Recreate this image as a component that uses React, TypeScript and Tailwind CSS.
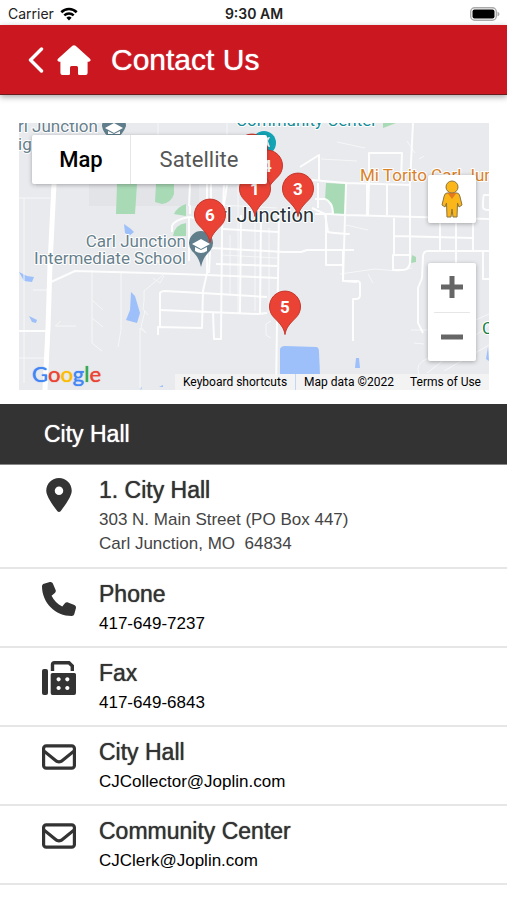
import type { ReactNode } from 'react';
import { FaLocationDot, FaPhone, FaRegEnvelope } from 'react-icons/fa6';

interface Contact {
  icon: ReactNode;
  title: string;
  lines: string[];
  href?: string;
}

interface Pin {
  id: number;
  position: string;
}

const PINS: Pin[] = [
  { id: 2, position: 'left-[217px] top-[10px]' },
  { id: 4, position: 'left-[232px] top-[26px]' },
  { id: 1, position: 'left-[220px] top-[49px]' },
  { id: 3, position: 'left-[263px] top-[49px]' },
  { id: 6, position: 'left-[175px] top-[75px]' },
  { id: 5, position: 'left-[250px] top-[167px]' },
];

function FaxIcon() {
  return (
    <svg viewBox="0 0 34 34" className="size-[34px]" aria-hidden="true">
      <rect x="0" y="8" width="6" height="26" rx="2" fill="currentColor" />
      <path d="M10.500 10V3.500Q10.500 1.700 12.300 1.700H27L30.300 5V10" fill="none" stroke="currentColor" strokeWidth="3.400" />
      <path
        fillRule="evenodd"
        fill="currentColor"
        d="M10.500 12H32.500Q34 12 34 13.500V32Q34 34 32 34H10.500Q8.700 34 8.700 32V13.500Q8.700 12 10.500 12ZM16.600 16.200a2.100 2.100 0 1 0 .01 0ZM25.300 16.200a2.100 2.100 0 1 0 .01 0ZM16.600 24.900a2.100 2.100 0 1 0 .01 0ZM25.300 24.900a2.100 2.100 0 1 0 .01 0Z"
      />
    </svg>
  );
}

const CONTACTS: Contact[] = [
  {
    icon: <FaLocationDot className="h-[34px] w-[34px]" />,
    title: '1. City Hall',
    lines: ['303 N. Main Street (PO Box 447)', 'Carl Junction, MO\u00a0 64834'],
  },
  {
    icon: <FaPhone className="size-[34px]" />,
    title: 'Phone',
    lines: ['417-649-7237'],
    href: 'tel:417-649-7237',
  },
  {
    icon: <FaxIcon />,
    title: 'Fax',
    lines: ['417-649-6843'],
    href: 'tel:417-649-6843',
  },
  {
    icon: <FaRegEnvelope className="size-[34px]" />,
    title: 'City Hall',
    lines: ['CJCollector@Joplin.com'],
    href: 'mailto:CJCollector@Joplin.com',
  },
  {
    icon: <FaRegEnvelope className="size-[34px]" />,
    title: 'Community Center',
    lines: ['CJClerk@Joplin.com'],
    href: 'mailto:CJClerk@Joplin.com',
  },
];

function StatusBar() {
  return (
    <div className="grid h-[25px] grid-cols-3 items-center pt-[3px] pr-[7px] pl-[8px] font-['Inter',sans-serif] text-[14px] leading-[20px] text-[#222]">
      <div className="flex items-center gap-[6px]">
        <span>Carrier</span>
        <svg viewBox="0 0 18 14" className="h-[14px] w-[18px] text-black" fill="none" stroke="currentColor" aria-hidden="true">
          <path d="M1.300 5.200A11 11 0 0 1 16.700 5.200" strokeWidth="2.600" />
          <path d="M4.300 8.400A6.800 6.800 0 0 1 13.700 8.400" strokeWidth="2.400" />
          <path d="M9 13.500L6.400 10.800A3.800 3.800 0 0 1 11.600 10.800Z" fill="currentColor" stroke="none" />
        </svg>
      </div>
      <span className="text-center font-semibold">9:30 AM</span>
      <svg viewBox="0 0 30 14" className="h-[14px] w-[30px] justify-self-end" aria-hidden="true">
        <rect x="0.700" y="0.700" width="25.600" height="12.600" rx="4" fill="#fff" stroke="#aaa" strokeWidth="1.400" />
        <rect x="2.500" y="2.500" width="22" height="9" rx="2" fill="#000" />
        <path d="M27.500 4.500Q29.500 5.500 29.500 7T27.500 9.500Z" fill="#aaa" />
      </svg>
    </div>
  );
}

function Header() {
  return (
    <header className="flex h-[70px] items-center border-b border-[#6b1a1e] bg-[#cb1820] pl-[28px] text-white shadow-[0_2px_6px_rgba(0,0,0,0.35)]">
      <button type="button" aria-label="Back" className="mr-[13px]">
        <svg viewBox="0 0 16 26" className="h-[26px] w-[16px]" fill="none" stroke="currentColor" strokeWidth="3.400" strokeLinecap="round" strokeLinejoin="round">
          <path d="M13.500 2L2.500 13L13.500 24" />
        </svg>
      </button>
      <a href="#home" aria-label="Home" className="mr-[20px]">
        <svg viewBox="0 0 34 30" className="h-[30px] w-[34px]" fill="currentColor">
          <path d="M15.400.8Q17-.5 18.600.8L33 13.800Q34.600 16.200 32 16.700H30.600V28Q30.600 30 28.600 30H22.300Q21 30 21 28.700V22.500Q21 21 19.500 21H14.500Q13 21 13 22.500V28.700Q13 30 11.700 30H5.400Q3.400 30 3.400 28V16.700H2Q-.6 16.200 1 13.800Z" />
        </svg>
      </a>
      <h1 className="text-[30px] leading-[36px] [text-shadow:0_0_1px_currentColor]">Contact Us</h1>
    </header>
  );
}

function MapArtwork() {
  return (
    <svg
      viewBox="0 0 470 267"
      preserveAspectRatio="xMidYMid slice"
      className="h-full w-full font-['Roboto',sans-serif]"
      fill="none"
      strokeLinejoin="round"
      aria-hidden="true"
    >
      <rect width="470" height="267" fill="#e8eaed" />
      <path d="M70 61H180V83H70Z" fill="#e3e4e8" />
      {/* parks */}
      <g fill="#a8dab5">
        <path d="M98 61H118L116 91H97Z" />
        <path d="M137 61H155V71Q152 80 143 81L136 79Z" />
        <path d="M167 81V93L155 91Q158 84 167 81Z" />
        <path d="M167 100V113H154Q155 102 167 100Z" />
        <path d="M307 60L327 61L325 92L315 91Q314 80 306 77Z" />
        <path d="M364 0H377L364 5Z" />
        <path d="M393 132L397 134V139L392 140Z" />
      </g>
      {/* water */}
      <g fill="#9dc0fa">
        <path d="M0 149L8 153L15 154L13 159L5 158Z" />
        <path d="M105 101L112 106L115 109L110 113L106 110Z" />
        <path d="M112 169L116 173L121 190L118 200L107 197L111 187Z" />
        <path d="M10 193L18 197L17 200L13 199Z" />
        <path d="M261 226Q262 223 266 223L297 224Q300 224 300 229L301 251H261Z" />
        <path d="M337 235H340L341 245H336Z" />
        <path d="M120 266L123 264L122 267Z" />
        <path d="M140 264L144 262V264Z" />
        <path d="M469 224L467 236L470 238Z" />
      </g>
      {/* minor roads */}
      <g stroke="#f6f7f8" strokeWidth="1">
        <path d="M0 75H31M139 0V12M208 0V12M5 75V260M16 30V64" />
        <path d="M73 147V220L83 228M73 177L84 187M73 195L84 204M102 150V207L99 224M145 151L137 158L125 168V178L124 186L129 192M126 188L122 204L127 210L121 205V267M32 167H14M37 203H57" />
        <path d="M36 203L42 198M0 235H25M145 153L141 160L134 155" />
        <path d="M219 62V190M201 82L258 85M236 84V188M250 105V190M203 132L258 135M211 112V172" />
        <path d="M302 36L338 38M318 19L346 25M388 18L396 30M400 36L405 33M327 102L349 107M321 151L356 146L379 148L393 145M349 151L354 160M392 207H408L420 198M395 220L405 221M400 252Q395 240 410 235L450 200L470 191M408 250L470 202M425 248L470 222" />
        <path d="M252 198L247 201V212L252 215" />
      </g>
      <g stroke="#fff" strokeWidth="2" strokeOpacity="0.9">
        <path d="M32 159L56 148L131 150L188 152L259 155L258 201L257 267" />
        <path d="M188 61V150L184 168L183 205L139 204V212M141 205V170Q142 168 146 168L183 170L248 174" />
        <path d="M141 187L239 191L248 190M194 189L195 216H202L203 107L205 62" />
        <path d="M192 61V82M208 62L204 88M222 92L221 190M242 92L241 191M260 90L259 155M171 61L170 83M171 82V91M170 138V94L181 96M201 88L190 95" />
        <path d="M153 109V103Q155 97 170 94" />
        <path d="M204 106L260 109M192 125L265 129L282 129L288 127L335 127M197 141L258 143M192 104L190 150" />
        <path d="M293 57L327 60L391 62M299 60V85M293 85L306 91L309 109Q312 110 330 111H326M307 91V142H323M296 76H306Q314 79 314 91H296M327 61L324 158M309 91L327 92L470 96" />
        <path d="M300 57V32L281 44M350 62V30H383L382 57M394 0L391 60V140Q390 147 384 147H374V132H391M368 62V92M350 62L349 93M375 95V132M375 113L454 115M348 61V92" />
        <path d="M324 158H338Q341 158 341 161V172Q341 176 337 176H334V218M324 127V158L338 159" />
        <path d="M470 128H409Q404 128 404 134L403 155L399 165V200L404 210M421 96V129M437 96V140M454 94V129M470 72H465Q464 73 464 84Q464 87 470 87M464 128V156H470" />
        <path d="M0 208H29M131 139L151 138" />
      </g>
      <path d="M35 61L31 142L29 205L26 267" stroke="#fff" strokeWidth="5" />
      {/* place labels */}
      <g stroke="#fff" strokeWidth="2" paintOrder="stroke" fontSize="17">
        <text x="-1" y="9" fill="#67808c">rl Junction</text>
        <text x="-1" y="27" fill="#67808c">ig</text>
        <text x="167" y="124" textAnchor="end" fill="#67808c">Carl Junction</text>
        <text x="167" y="141" textAnchor="end" fill="#67808c">Intermediate School</text>
        <text x="217" y="3" fill="#168b97">Community Center</text>
        <text x="341" y="58" fill="#d9822b">Mi Torito Carl Jun</text>
        <text x="463" y="211" fill="#188046">C</text>
      </g>
      <text x="177" y="99" fontSize="20" fill="#263238" stroke="#fff" strokeWidth="2" paintOrder="stroke">Carl Junction</text>
      {/* school pins */}
      <g fill="#607d8b">
        <path d="M182 144Q180 134 173 128A12 12 0 1 1 191 128Q184 134 182 144Z" />
        <path d="M95 17Q84 12 83 3A12 12 0 0 1 107 3Q104 12 95 17Z" />
      </g>
      <g fill="#fff">
        <path d="M173 121L182 116L191 121L182 126ZM176 124V128Q182 132 188 128V124L182 127Z" />
        <path d="M86 5L95 0L104 5L95 10ZM89 8V11H101V8L95 11Z" />
      </g>
      <circle cx="245" cy="20" r="12" fill="#12a3b4" />
      <path d="M246 15L251 14L249 18L251 24L247 23Z" fill="#fff" />
    </svg>
  );
}

function MapPin({ id, position }: Pin) {
  return (
    <button
      type="button"
      aria-label={`Location ${id}`}
      className={`absolute flex h-[45px] w-[32px] justify-center font-['Roboto',sans-serif] text-[17px] leading-[34px] font-bold text-white ${position}`}
    >
      <svg viewBox="0 0 32 45" className="absolute inset-0 h-full w-full" aria-hidden="true">
        <path
          d="M16 44.500C15.200 38 11 33.500 5.500 28A15.500 15.500 0 1 1 26.500 28C21 33.500 16.800 38 16 44.500Z"
          fill="#ea4335"
          stroke="#c5372c"
        />
      </svg>
      <span className="relative">{id}</span>
    </button>
  );
}

function Pegman() {
  return (
    <svg viewBox="0 0 22 38" className="h-[38px] w-[22px]" fill="#fbb61a" stroke="#8b7442" strokeWidth="1" strokeLinejoin="round" aria-hidden="true">
      <path d="M6 13H16Q18 13 18.800 16L21 25L18 27L16.500 23L16 37H12L11 29L10 37H6L5.500 23L4 27L1 25L3.200 16Q4 13 6 13Z" />
      <path d="M6.500 13H15.500L11 19Z" fill="#e57a1c" stroke="none" />
      <circle cx="11" cy="7" r="6" />
    </svg>
  );
}

function LocationMap() {
  return (
    <section aria-label="Map" className="relative mt-[28px] mr-[18px] ml-[19px] h-[267px] overflow-hidden font-['Roboto',sans-serif]">
      <MapArtwork />
      {PINS.map((pin) => (
        <MapPin key={pin.id} {...pin} />
      ))}

      <div className="absolute top-[12px] left-[13px] flex h-[49px] rounded-[2px] bg-white text-[22px] leading-[28px] shadow-[0_1px_4px_rgba(0,0,0,0.3)]">
        <button type="button" className="w-[99px] border-r border-[#e6e6e6] font-medium text-black">Map</button>
        <button type="button" className="w-[136px] text-[#565656]">Satellite</button>
      </div>

      <button
        type="button"
        aria-label="Street View"
        className="absolute top-[52px] right-[13px] flex size-[48px] items-center justify-center rounded-[2px] bg-white shadow-[0_1px_4px_rgba(0,0,0,0.3)]"
      >
        <Pegman />
      </button>

      <div className="absolute top-[140px] right-[13px] flex h-[98px] w-[48px] flex-col items-center rounded-[2px] bg-white text-[#666] shadow-[0_1px_4px_rgba(0,0,0,0.3)]">
        <button type="button" aria-label="Zoom in" className="flex w-full flex-1 items-center justify-center">
          <svg viewBox="0 0 22 22" className="size-[22px]" fill="currentColor">
            <path d="M8.500 0H13.500V8.500H22V13.500H13.500V22H8.500V13.500H0V8.500H8.500Z" />
          </svg>
        </button>
        <div className="h-px w-[36px] bg-[#e6e6e6]" />
        <button type="button" aria-label="Zoom out" className="flex w-full flex-1 items-center justify-center">
          <svg viewBox="0 0 22 22" className="size-[22px]" fill="currentColor">
            <path d="M0 8.500H22V13.500H0Z" />
          </svg>
        </button>
      </div>

      <a href="#google" className="absolute bottom-0 left-[13px] font-['Lato',sans-serif] text-[22px] leading-[32px] [text-shadow:0_0_1px_currentColor]">
        <span className="text-[#4285f4]">G</span>
        <span className="text-[#ea4335]">o</span>
        <span className="text-[#fbbc04]">o</span>
        <span className="text-[#4285f4]">g</span>
        <span className="text-[#34a853]">l</span>
        <span className="text-[#ea4335]">e</span>
      </a>

      <div className="absolute right-0 bottom-0 flex h-[16px] bg-[#f5f5f5]/80 text-[12px] leading-[16px] text-black">
        <button type="button" className="border-r border-[#c3d6f7] px-[8px]">Keyboard shortcuts</button>
        <span className="px-[8px]">Map data ©2022</span>
        <a href="#terms" className="px-[8px]">Terms of Use</a>
      </div>
    </section>
  );
}

function ContactRow({ icon, title, lines, href }: Contact) {
  return (
    <li className="flex gap-[23px] border-b-2 border-[#e6e6e6] pt-[11px] pb-[10px] pl-[42px] text-[#333]">
      <div className="pt-[2px]">{icon}</div>
      <div>
        <h3 className="mb-[4px] text-[23px] leading-[28px] [text-shadow:0_0_1px_currentColor]">{title}</h3>
        {href ? (
          <a href={href} className="block text-[17px] leading-[24px] text-black">{lines[0]}</a>
        ) : (
          <address className="pb-px text-[17px] leading-[24px] text-[#444] not-italic">
            {lines.map((line) => (
              <div key={line}>{line}</div>
            ))}
          </address>
        )}
      </div>
    </li>
  );
}

function App() {
  return (
    <div className="min-h-screen bg-white font-['Liberation_Sans',sans-serif]">
      <StatusBar />
      <Header />
      <main>
        <LocationMap />
        <h2 className="mt-[14px] border-b border-[#888] bg-[#333] py-[16px] pl-[44px] text-[23px] leading-[28px] text-white [text-shadow:0_0_1px_currentColor]">
          City Hall
        </h2>
        <ul>
          {CONTACTS.map((contact) => (
            <ContactRow key={contact.lines[0]} {...contact} />
          ))}
        </ul>
      </main>
    </div>
  );
}

export default App;
